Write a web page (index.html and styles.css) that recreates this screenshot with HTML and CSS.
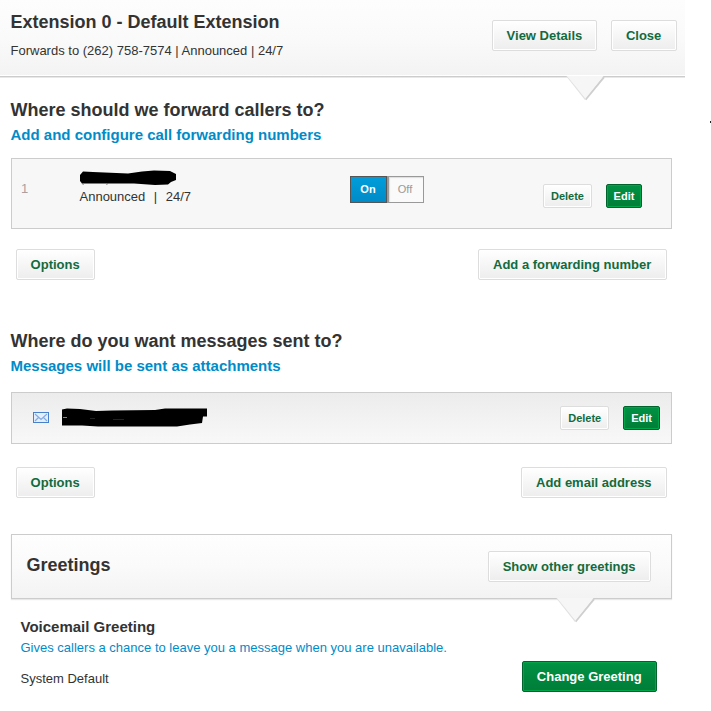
FILE: index.html
```html
<!DOCTYPE html>
<html lang="en">
<head>
    <meta charset="UTF-8">
    <meta name="viewport" content="width=device-width, initial-scale=1.0">
    <title>Extension 0 - Default Extension</title>
    <link rel="stylesheet" href="styles.css">
</head>
<body>
    <div class="header">
        <div class="header-text">
            <h1>Extension 0 - Default Extension</h1>
            <p>Forwards to (262) 758-7574 | Announced | 24/7</p>
        </div>
        <div class="header-buttons">
            <a class="btn details">View Details</a>
            <a class="btn close">Close</a>
        </div>
        <svg class="pointer" width="40" height="26" viewBox="0 0 40 26">
            <path d="M19.500 23.500 L38 1" fill="none" stroke="#cfcfcf" stroke-width="2"/>
            <path d="M1 0 L19.500 23.500" fill="none" stroke="#e2e2e2" stroke-width="1.500"/>
            <path d="M1 0 H37.500 L19.500 22.500 Z" fill="#f6f6f6"/>
        </svg>
    </div>
    <span class="speck"></span>

    <div class="section forward">
        <h2>Where should we forward callers to?</h2>
        <h3>Add and configure call forwarding numbers</h3>
        <div class="row number-row">
            <span class="index">1</span>
            <div class="number">
                <svg class="redacted" width="100" height="18" viewBox="0 0 100 18">
                    <path d="M0 5 L3 1.500 L13 2 L48 3.500 L62 1.500 L74 0.500 L90 1 L96 4 V10 L91 12 L88 14.500 L75 15 L54 13.500 H2 L0 11 Z"/>
                    <path d="M2 13 L3.500 15 M28 13 L26.500 15" fill="none" stroke="#666" stroke-width="0.800"/>
                </svg>
                <div class="schedule">Announced<span>|</span>24/7</div>
            </div>
            <div class="toggle"><span class="on">On</span><span class="off">Off</span></div>
            <div class="row-buttons">
                <a class="btn small">Delete</a>
                <a class="btn small green">Edit</a>
            </div>
        </div>
        <div class="actions">
            <a class="btn">Options</a>
            <a class="btn wide">Add a forwarding number</a>
        </div>
    </div>

    <div class="section messages">
        <h2>Where do you want messages sent to?</h2>
        <h3>Messages will be sent as attachments</h3>
        <div class="row email-row">
            <svg class="mail" width="16" height="11" viewBox="0 0 16 11">
                <rect x="0.500" y="0.500" width="15" height="10" fill="#e3efff" stroke="#4880cc"/>
                <path d="M2 2 L8 7.500 L14 2 M2 9 L5.500 5.500 M14 9 L10.500 5.500" fill="none" stroke="#84aae0" stroke-width="1.200"/>
            </svg>
            <svg class="redacted" width="146" height="20" viewBox="0 0 146 20">
                <path d="M0 1.500 L5 0.500 L18 1 L34 3 L50 2.500 L93 2 L103 0.500 H145 V8.500 H141 L140 15 L128 16.500 L115 18.500 H36 L20 17.500 L0 17.500 Z"/>
                <path d="M1 9.500 H5" fill="none" stroke="#bbb" stroke-width="0.700"/>
                <path d="M28 10.500 H33 M51 11.500 H62" fill="none" stroke="#444" stroke-width="0.500"/>
            </svg>
            <div class="row-buttons">
                <a class="btn small">Delete</a>
                <a class="btn small green">Edit</a>
            </div>
        </div>
        <div class="actions">
            <a class="btn">Options</a>
            <a class="btn">Add email address</a>
        </div>
    </div>

    <div class="greetings">
        <h2>Greetings</h2>
        <a class="btn">Show other greetings</a>
        <svg class="pointer" width="40" height="26" viewBox="0 0 40 26">
            <path d="M19.500 23.500 L38 1" fill="none" stroke="#cfcfcf" stroke-width="2"/>
            <path d="M1 0 L19.500 23.500" fill="none" stroke="#e2e2e2" stroke-width="1.500"/>
            <path d="M1 0 H37.500 L19.500 22.500 Z" fill="#f6f6f6"/>
        </svg>
    </div>
    <div class="voicemail">
        <div>
            <h4>Voicemail Greeting</h4>
            <p class="hint">Gives callers a chance to leave you a message when you are unavailable.</p>
            <p class="current">System Default</p>
        </div>
        <a class="btn green">Change Greeting</a>
    </div>
</body>
</html>
```
FILE: styles.css
```css
* {
    box-sizing: border-box;
}
body {
    margin: 0;
    height: 711px;
    overflow: hidden;
    background: #fff;
    font-family: "Liberation Sans", Arial, sans-serif;
    font-size: 13px;
    color: #333;
}
h1, h2, h3, h4, p {
    margin: 0;
    white-space: nowrap;
    text-indent: -0.5px;
}
h1, h2 {
    font-size: 18px;
    line-height: 22px;
}
h3 {
    font-size: 15px;
    line-height: 18px;
    color: #008cc8;
}
.header {
    position: relative;
    display: flex;
    justify-content: space-between;
    width: 685px;
    height: 77px;
    padding: 11px 8px 0 11px;
    background: linear-gradient(#fdfdfd, #fafafa 50%, #f3f3f3);
    border-bottom: 1px solid #ccc;
    box-shadow: 0 1px 0 #e8e8e8, inset 0 -1px 0 #fff;
}
.header-text p {
    margin-top: 10px;
    line-height: 16px;
}
.header-buttons {
    display: flex;
    gap: 14px;
    padding-top: 9px;
}
.btn {
    display: block;
    height: 31px;
    padding: 0 14.4px 0 13.6px;
    border: 1px solid #ddd;
    border-radius: 2px;
    background: linear-gradient(#fff, #ededed);
    box-shadow: inset 0 0 0 1px #fff;
    color: #126b3e;
    font-size: 13px;
    font-weight: bold;
    line-height: 29px;
    text-align: center;
    white-space: nowrap;
}
.btn.small {
    height: 24px;
    padding: 0 7px;
    font-size: 11px;
    line-height: 23px;
}
.btn.green {
    border-color: #00632c;
    background: linear-gradient(#009245, #007d38);
    box-shadow: inset 0 0 0 1px #00a54a;
    color: #fff;
}
.btn.details {
    width: 105px;
}
.btn.close {
    width: 66px;
}
.btn.wide {
    width: 189px;
}
.pointer {
    position: absolute;
    left: 566px;
    top: 76px;
}
.speck {
    position: absolute;
    left: 710px;
    top: 121px;
    width: 1px;
    height: 2px;
    background: #222;
}
.section {
    width: 672px;
    padding-left: 11px;
}
.forward {
    padding-top: 22px;
    height: 253px;
}
.section h3 {
    margin-top: 5px;
}
.row {
    display: flex;
    border: 1px solid #ccc;
}
.number-row {
    height: 71px;
    margin-top: 14px;
    padding-left: 9px;
    background: #f7f7f7;
}
.index {
    width: 59px;
    padding-top: 22px;
    color: #aaa0a0;
}
.number {
    width: 270px;
    padding-top: 11px;
}
.redacted {
    display: block;
}
.schedule {
    margin-top: 1px;
    line-height: 16px;
    text-indent: -0.5px;
}
.schedule span {
    margin: 0 8.5px;
}
.toggle {
    display: flex;
    width: 74px;
    height: 27px;
    margin-top: 17px;
    font-size: 11px;
    line-height: 25px;
    text-align: center;
}
.toggle .on {
    width: 37px;
    border: 1px solid #555;
    background: linear-gradient(#009ddb, #008bc7);
    color: #fff;
    font-weight: bold;
    text-indent: -1px;
}
.toggle .off {
    width: 37px;
    border: 1px solid #999;
    border-left: 2px solid #999;
    background: #fafafa;
    box-shadow: inset 1px 1px 1px #ddd;
    color: #999;
    padding-right: 2px;
}
.row-buttons {
    display: flex;
    gap: 14px;
    margin-left: auto;
}
.number-row .row-buttons {
    padding: 25px 29px 0 0;
}
.number-row .btn.green {
    width: 36px;
    padding: 0 6px;
}
.actions {
    display: flex;
    justify-content: space-between;
    padding: 0 5px;
    margin-top: 20px;
}
.email-row {
    height: 52px;
    margin-top: 17px;
    padding-left: 21px;
    background: linear-gradient(#ececec, #f8f8f8);
}
.mail {
    margin: 19px 13px 0 0;
}
.email-row .redacted {
    margin-top: 15px;
}
.email-row .row-buttons {
    padding: 13px 11px 0 0;
}
.messages {
    height: 204px;
}
.messages .actions {
    margin-top: 23px;
}
.greetings {
    position: relative;
    display: flex;
    justify-content: space-between;
    width: 661px;
    height: 65px;
    margin-left: 11px;
    padding: 16px 20px 0 15px;
    border: 1px solid #ccc;
    background: linear-gradient(#fefefe, #fafafa 50%, #f3f3f3);
    box-shadow: 0 1px 1px #e8e8e8;
}
.greetings h2 {
    padding-top: 3px;
}
.greetings .pointer {
    left: 544px;
    top: 63px;
}
.voicemail {
    display: flex;
    justify-content: space-between;
    width: 657px;
    padding: 19px 0 0 21px;
}
.voicemail h4 {
    font-size: 15px;
    line-height: 18px;
}
.hint {
    margin-top: 4px;
    line-height: 16px;
    color: #008cc8;
}
.current {
    margin-top: 15px;
    line-height: 16px;
}
.voicemail .btn {
    margin-top: 43px;
}
```
